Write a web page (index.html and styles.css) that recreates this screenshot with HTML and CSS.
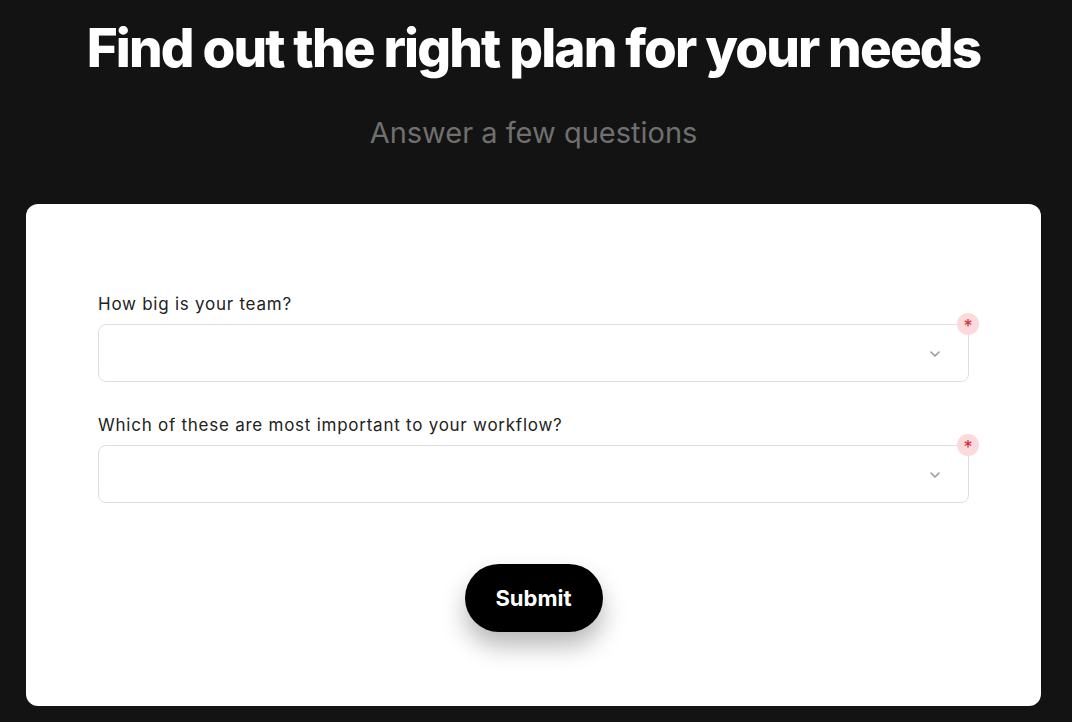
FILE: index.html
```html
<!DOCTYPE html>
<html lang="en">

<head>
    <meta charset="UTF-8">
    <meta name="viewport" content="width=device-width, initial-scale=1.0">
    <title>Find the right plan</title>
    <link rel="stylesheet" href="styles.css">
</head>

<body>
    <div class="page">
        <h1 class="title">Find out the right plan for your needs</h1>
        <p class="subtitle">Answer a few questions</p>

        <form class="card">
            <div class="field">
                <label for="teamSize">How big is your team?</label>
                <div class="select-wrap">
                    <select id="teamSize" required></select>
                    <svg class="chevron" width="12" height="8" viewBox="0 0 12 8">
                        <path d="M2 2l4 4 4-4" fill="none" stroke="#9a9a9a" stroke-width="1.6" stroke-linecap="round" stroke-linejoin="round"/>
                    </svg>
                    <span class="required">*</span>
                </div>
            </div>

            <div class="field">
                <label for="workflow">Which of these are most important to your workflow?</label>
                <div class="select-wrap">
                    <select id="workflow" required></select>
                    <svg class="chevron" width="12" height="8" viewBox="0 0 12 8">
                        <path d="M2 2l4 4 4-4" fill="none" stroke="#9a9a9a" stroke-width="1.6" stroke-linecap="round" stroke-linejoin="round"/>
                    </svg>
                    <span class="required">*</span>
                </div>
            </div>

            <div class="actions">
                <button type="button" class="submit">Submit</button>
            </div>
        </form>
    </div>
</body>

</html>
```

FILE: styles.css
```css
body {
    margin: 0;
    padding: 0;
    background-color: #131313;
    font-family: Inter, "Noto Sans", sans-serif;
    overflow: hidden;
}

.page {
    display: flex;
    flex-direction: column;
    align-items: center;
    padding: 16px 31px 0 26px;
}

.title {
    margin: 0;
    font-size: 53px;
    font-weight: 800;
    letter-spacing: -0.035em;
    line-height: 64px;
    color: #fff;
}

.subtitle {
    margin: 36px 0 0;
    font-size: 29px;
    font-weight: 400;
    line-height: 33px;
    color: #6f6f6f;
}

.card {
    box-sizing: border-box;
    align-self: stretch;
    margin-top: 55px;
    height: 502px;
    padding: 90px 72px 0;
    background-color: #fff;
    border-radius: 12px;
}

.field {
    margin-bottom: 33px;
}

.field label {
    display: block;
    font-size: 17px;
    letter-spacing: 0.75px;
    line-height: 20px;
    color: #222;
    margin-bottom: 10px;
}

.select-wrap {
    position: relative;
}

.select-wrap select {
    display: block;
    box-sizing: border-box;
    width: 100%;
    height: 58px;
    border: 1px solid #dedede;
    border-radius: 8px;
    background: #fff;
    appearance: none;
    -webkit-appearance: none;
}

.chevron {
    position: absolute;
    right: 28px;
    top: 26px;
}

.required {
    position: absolute;
    right: -10px;
    top: -11px;
    width: 22px;
    height: 22px;
    border-radius: 50%;
    background-color: #fcd9dc;
    color: #c8313b;
    font-size: 18px;
    line-height: 28px;
    text-align: center;
}

.actions {
    display: flex;
    justify-content: center;
    padding-top: 28px;
}

.submit {
    width: 138px;
    height: 68px;
    border: none;
    border-radius: 34px;
    background-color: #000;
    color: #fff;
    font-family: Inter, "Noto Sans", sans-serif;
    font-size: 22px;
    font-weight: 700;
    box-shadow: 0 14px 24px rgba(0, 0, 0, 0.28);
    cursor: pointer;
}
```
